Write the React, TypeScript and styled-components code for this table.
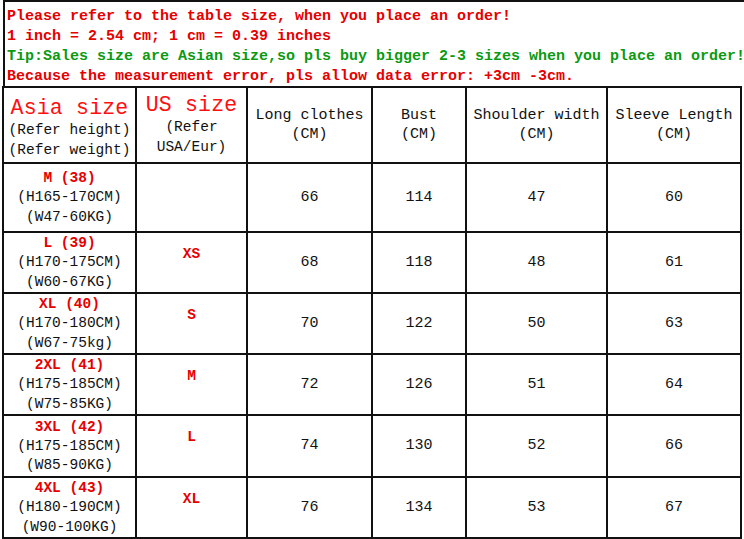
import React, { FC } from 'react';
import styled, { createGlobalStyle } from 'styled-components';

const GlobalStyle = createGlobalStyle`
  html, body {
    margin: 0;
    padding: 0;
    background: #fff;
  }
  body {
    font-family: "Liberation Mono", "DejaVu Sans Mono", monospace;
    color: #111;
  }
`;

interface SizeRow {
  asia: string;
  height: string;
  weight: string;
  us: string;
  length: number;
  bust: number;
  shoulder: number;
  sleeve: number;
  rowHeight: number;
}

const ROWS: SizeRow[] = [
  { asia: 'M (38)', height: '(H165-170CM)', weight: '(W47-60KG)', us: '', length: 66, bust: 114, shoulder: 47, sleeve: 60, rowHeight: 69 },
  { asia: 'L (39)', height: '(H170-175CM)', weight: '(W60-67KG)', us: 'XS', length: 68, bust: 118, shoulder: 48, sleeve: 61, rowHeight: 61 },
  { asia: 'XL (40)', height: '(H170-180CM)', weight: '(W67-75kg)', us: 'S', length: 70, bust: 122, shoulder: 50, sleeve: 63, rowHeight: 61 },
  { asia: '2XL (41)', height: '(H175-185CM)', weight: '(W75-85KG)', us: 'M', length: 72, bust: 126, shoulder: 51, sleeve: 64, rowHeight: 61 },
  { asia: '3XL (42)', height: '(H175-185CM)', weight: '(W85-90KG)', us: 'L', length: 74, bust: 130, shoulder: 52, sleeve: 66, rowHeight: 62 },
  { asia: '4XL (43)', height: '(H180-190CM)', weight: '(W90-100KG)', us: 'XL', length: 76, bust: 134, shoulder: 53, sleeve: 67, rowHeight: 60 },
];

const COLUMNS = [133, 111, 125, 94, 141, 134];

const MEASURES = ['Long clothes', 'Bust', 'Shoulder width', 'Sleeve Length'];

export default function App() {
  return (
    <>
      <GlobalStyle />
      <Page>
        <Notice>
          <NoticeLine tone='red'>Please refer to the table size, when you place an order!</NoticeLine>
          <NoticeLine tone='red'>1 inch = 2.54 cm; 1 cm = 0.39 inches</NoticeLine>
          <NoticeLine tone='green'>Tip:Sales size are Asian size,so pls buy bigger 2-3 sizes when you place an order!</NoticeLine>
          <NoticeLine tone='red'>Because the measurement error, pls allow data error: +3cm -3cm.</NoticeLine>
        </Notice>
        <SizeTable>
          <colgroup>
            {COLUMNS.map((w, i) => <col key={i} style={{ width: w }} />)}
          </colgroup>
          <thead>
            <HeadRow>
              <HeadCell lower={6}>
                <BigTitle>Asia size</BigTitle>
                <HeadSubLine>(Refer height)</HeadSubLine>
                <HeadSubLine>(Refer weight)</HeadSubLine>
              </HeadCell>
              <HeadCell>
                <BigTitle>US size</BigTitle>
                <HeadSubLine>(Refer</HeadSubLine>
                <HeadSubLine>USA/Eur)</HeadSubLine>
              </HeadCell>
              {MEASURES.map(m => (
                <HeadCell key={m}>
                  <MeasureLine>{m}</MeasureLine>
                  <MeasureLine>(CM)</MeasureLine>
                </HeadCell>
              ))}
            </HeadRow>
          </thead>
          <tbody>
            {ROWS.map(row => <BodyRow key={row.asia} row={row} />)}
          </tbody>
        </SizeTable>
      </Page>
    </>
  );
}

const BodyRow: FC<{ row: SizeRow }> = ({ row }) => (
  <tr style={{ height: row.rowHeight }}>
    <Cell>
      <SizeLabel>{row.asia}</SizeLabel>
      <SubLine>{row.height}</SubLine>
      <SubLine>{row.weight}</SubLine>
    </Cell>
    <Cell>
      <UsLabel>{row.us}</UsLabel>
    </Cell>
    <Cell><Value>{row.length}</Value></Cell>
    <Cell><Value>{row.bust}</Value></Cell>
    <Cell><Value>{row.shoulder}</Value></Cell>
    <Cell><Value>{row.sleeve}</Value></Cell>
  </tr>
);

const Page = styled.div`
  width: 741px;
  padding-left: 3px;
`;

const Notice = styled.div`
  border-left: 2px solid #111;
  border-top: 2px solid #111;
  padding: 5px 0 0 2px;
  height: 79px;
  overflow: hidden;
`;

const NoticeLine = styled.div<{ tone: 'red' | 'green' }>`
  font-size: 15px;
  line-height: 20px;
  font-weight: bold;
  white-space: nowrap;
  color: ${p => (p.tone === 'green' ? '#0a9a12' : '#e60000')};
`;

const SizeTable = styled.table`
  width: 740px;
  table-layout: fixed;
  border-collapse: collapse;
  margin-left: -1px;
`;

const HeadRow = styled.tr`
  height: 76px;
`;

const HeadCell = styled.th<{ lower?: number }>`
  border: 2px solid #111;
  padding: ${p => p.lower ?? 0}px 0 0;
  text-align: center;
  vertical-align: middle;
  font-weight: normal;
  white-space: nowrap;
`;

const Cell = styled.td`
  border: 2px solid #111;
  padding: 0;
  text-align: center;
  vertical-align: middle;
  white-space: nowrap;
`;

const BigTitle = styled.div`
  font-size: 21.5px;
  line-height: 23px;
  color: #ff1010;
  letter-spacing: 0.2px;
`;

const SubLine = styled.div`
  font-size: 14.5px;
  line-height: 19.5px;
  color: #111;
`;

const HeadSubLine = styled(SubLine)`
  line-height: 20px;
`;

const MeasureLine = styled.div`
  font-size: 15px;
  line-height: 19px;
  color: #111;
`;

const SizeLabel = styled.div`
  font-size: 14.5px;
  line-height: 20px;
  font-weight: bold;
  color: #e60000;
`;

const UsLabel = styled.div`
  font-size: 14.5px;
  line-height: 20px;
  font-weight: bold;
  color: #e60000;
  margin-bottom: 18px;
`;

const Value = styled.span`
  font-size: 15px;
  line-height: 20px;
  color: #111;
`;
